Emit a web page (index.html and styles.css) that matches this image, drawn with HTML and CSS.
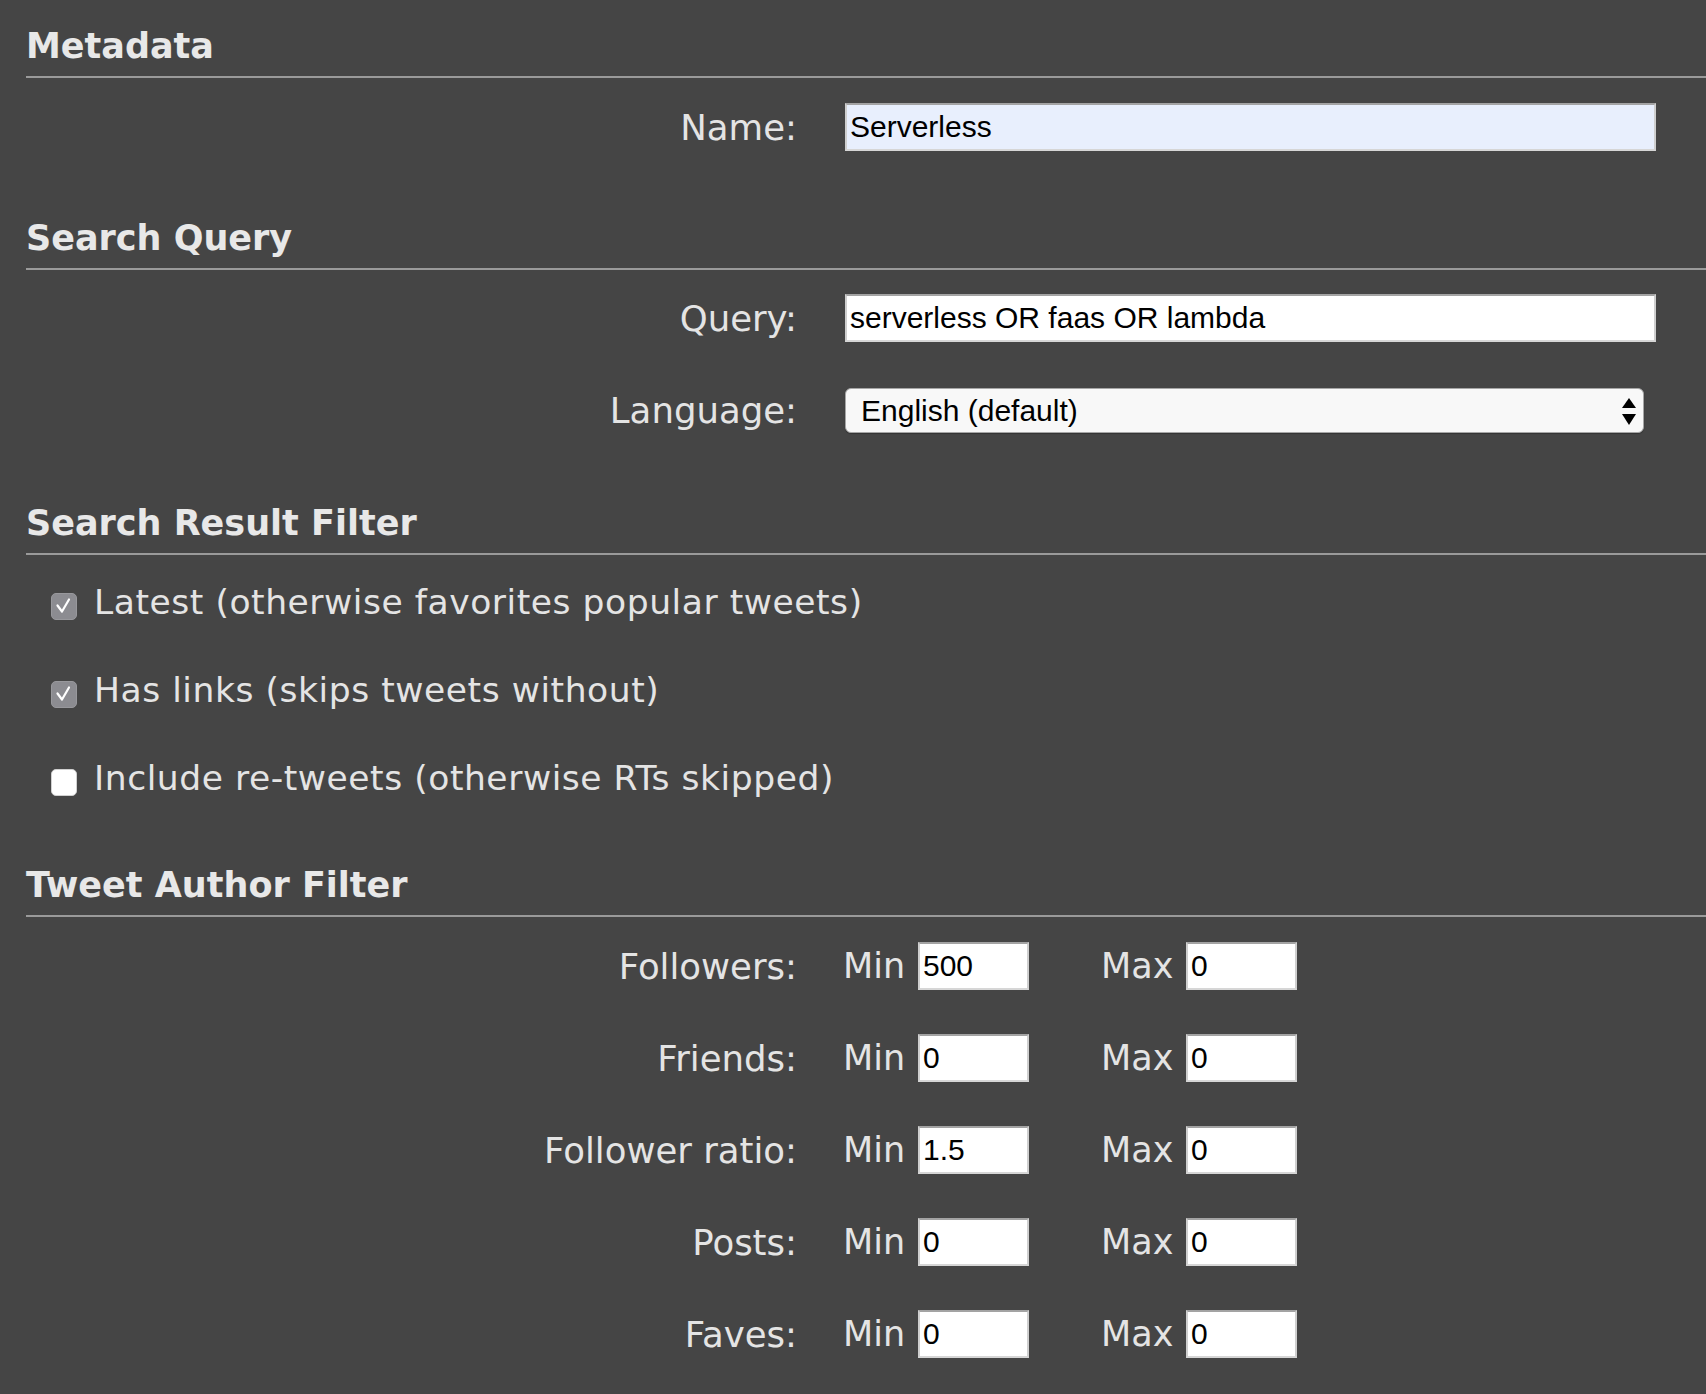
FILE: index.html
```html
<!DOCTYPE html>
<html>
<head>
<meta charset="utf-8">
<link rel="stylesheet" href="styles.css">
</head>
<body>
<div class="page">
  <section class="sec sec-meta">
    <h3 class="title">Metadata</h3>
    <div class="row first">
      <label class="label">Name:</label>
      <input class="text-input wide autofill" type="text" value="Serverless">
    </div>
  </section>

  <section class="sec sec-query">
    <h3 class="title">Search Query</h3>
    <div class="row first">
      <label class="label">Query:</label>
      <input class="text-input wide" type="text" value="serverless OR faas OR lambda">
    </div>
    <div class="row lang">
      <label class="label">Language:</label>
      <div class="select-wrap">
        <select class="select"><option>English (default)</option></select>
        <svg class="select-arrows" width="14" height="27" viewBox="0 0 14 27"><path d="M7 0 L14 10 L0 10 Z" fill="#000"/><path d="M0 16 L14 16 L7 27 Z" fill="#000"/></svg>
      </div>
    </div>
  </section>

  <section class="sec sec-filter">
    <h3 class="title">Search Result Filter</h3>
    <div class="check-row first">
      <span class="box checked"><svg width="26" height="27" viewBox="0 0 26 27"><polyline points="6.5,12.5 11,18.5 18,6.5" fill="none" stroke="#fff" stroke-width="2.2" stroke-linecap="round" stroke-linejoin="round"/></svg></span>
      <span class="check-text">Latest (otherwise favorites popular tweets)</span>
    </div>
    <div class="check-row">
      <span class="box checked"><svg width="26" height="27" viewBox="0 0 26 27"><polyline points="6.5,12.5 11,18.5 18,6.5" fill="none" stroke="#fff" stroke-width="2.2" stroke-linecap="round" stroke-linejoin="round"/></svg></span>
      <span class="check-text">Has links (skips tweets without)</span>
    </div>
    <div class="check-row">
      <span class="box"></span>
      <span class="check-text">Include re-tweets (otherwise RTs skipped)</span>
    </div>
  </section>

  <section class="sec sec-author">
    <h3 class="title">Tweet Author Filter</h3>
    <div class="row range first">
      <label class="label">Followers:</label>
      <span class="mm min">Min</span><input class="text-input small" type="text" value="500">
      <span class="mm max">Max</span><input class="text-input small" type="text" value="0">
    </div>
    <div class="row range">
      <label class="label">Friends:</label>
      <span class="mm min">Min</span><input class="text-input small" type="text" value="0">
      <span class="mm max">Max</span><input class="text-input small" type="text" value="0">
    </div>
    <div class="row range">
      <label class="label">Follower ratio:</label>
      <span class="mm min">Min</span><input class="text-input small" type="text" value="1.5">
      <span class="mm max">Max</span><input class="text-input small" type="text" value="0">
    </div>
    <div class="row range">
      <label class="label">Posts:</label>
      <span class="mm min">Min</span><input class="text-input small" type="text" value="0">
      <span class="mm max">Max</span><input class="text-input small" type="text" value="0">
    </div>
    <div class="row range">
      <label class="label">Faves:</label>
      <span class="mm min">Min</span><input class="text-input small" type="text" value="0">
      <span class="mm max">Max</span><input class="text-input small" type="text" value="0">
    </div>
  </section>
</div>
</body>
</html>
```

FILE: styles.css
```css
html, body {
  margin: 0;
  padding: 0;
  background: #454545;
}
body {
  font-family: "DejaVu Sans", Verdana, sans-serif;
  color: #e4e4e4;
  width: 1706px;
  min-height: 1394px;
  overflow: hidden;
}
.page {
  padding: 26px 0 0 26px;
}
.title {
  margin: 0;
  font-size: 35px;
  font-weight: bold;
  line-height: 40px;
  color: #e8e8e8;
  padding-bottom: 10px;
  border-bottom: 2px solid #9a9a9a;
}
.sec-query .title { margin-top: 67px; }
.sec-filter .title { margin-top: 70px; }
.sec-author .title { margin-top: 63px; }

.row {
  display: flex;
  align-items: center;
}
.row.first { margin-top: 25px; }
.sec-query .row.first { margin-top: 24px; }
.row.lang { margin-top: 46px; }
.row.range { margin-top: 44px; }
.row.range.first { margin-top: 25px; }

.label {
  width: 771px;
  margin-right: 48px;
  text-align: right;
  font-size: 35.5px;
  color: #e4e4e4;
}

.text-input {
  box-sizing: border-box;
  height: 48px;
  margin: 0;
  font-family: "Liberation Sans", Arial, sans-serif;
  font-size: 30px;
  color: #000;
  background: #fff;
  border: 2px solid;
  border-color: #a3a3a3 #cfcfcf #d6d6d6 #cfcfcf;
  padding: 0 0 0 3px;
  outline: none;
}
.text-input.wide { width: 811px; }
.text-input.autofill { background: #e8effd; }
.text-input.small { width: 111px; }

.select-wrap {
  position: relative;
  width: 799px;
  height: 45px;
}
.select {
  -webkit-appearance: none;
  appearance: none;
  box-sizing: border-box;
  width: 799px;
  height: 45px;
  margin: 0;
  background: #f8f8f8;
  border: 1px solid #a6a6a6;
  border-radius: 6px;
  box-shadow: 0 1px 1px rgba(0,0,0,0.25);
  font-family: "Liberation Sans", Arial, sans-serif;
  font-size: 30px;
  color: #000;
  padding: 0 0 0 15px;
  outline: none;
}
.select-arrows {
  position: absolute;
  left: 777px;
  top: 10px;
}

.check-row {
  display: flex;
  align-items: center;
  height: 48px;
  margin-top: 40px;
}
.check-row.first { margin-top: 23px; }
.box {
  box-sizing: border-box;
  width: 26px;
  height: 27px;
  margin-left: 25px;
  margin-right: 17px;
  margin-top: 9px;
  border-radius: 5px;
  background: #fff;
  border: 1px solid #d0d0d0;
  display: block;
}
.box svg { display: block; margin: -1px; }
.box.checked {
  background: #8c8c91;
  border-color: #98989c;
}
.check-text {
  font-size: 34.5px;
  letter-spacing: 0.55px;
  color: #e4e4e4;
}

.mm {
  font-size: 35px;
  color: #e4e4e4;
}
.mm.min { width: 75px; margin-left: -2px; }
.mm.max { width: 85px; margin-left: 72px; }
```
